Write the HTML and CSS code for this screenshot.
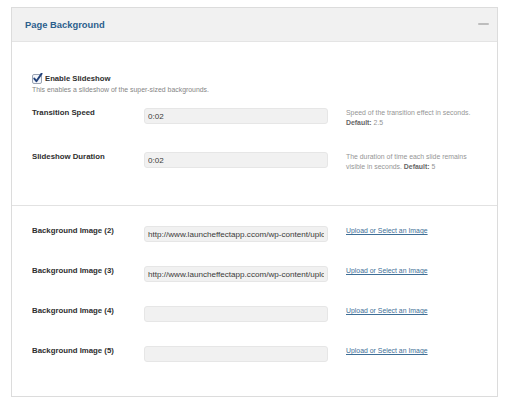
FILE: index.html
```html
<!DOCTYPE html>
<html>
<head>
<meta charset="utf-8">
<link rel="stylesheet" href="styles.css">
</head>
<body>
<div class="panel">
  <div class="panel-head">
    <h2 class="panel-title">Page Background</h2>
    <span class="toggle"></span>
  </div>
  <div class="section section-top">
    <div class="check-row">
      <span class="checkbox">
        <svg width="11" height="11" viewBox="0 0 11 11">
          <rect x="0.5" y="1.5" width="9" height="9" rx="1.5" fill="#f4f6fa" stroke="#9aa3b3"/>
          <path d="M2.3 5.6 L4.4 8.2 L9.6 0.6" fill="none" stroke="#23427a" stroke-width="1.9" stroke-linecap="round" stroke-linejoin="round"/>
        </svg>
      </span>
      <span class="check-label">Enable Slideshow</span>
    </div>
    <p class="desc">This enables a slideshow of the super-sized backgrounds.</p>
    <div class="field field-first">
      <span class="field-label">Transition Speed</span>
      <input class="text-input" type="text" value="0:02">
      <p class="help">Speed of the transition effect in seconds.<br><b>Default:</b> 2.5</p>
    </div>
    <div class="field">
      <span class="field-label">Slideshow Duration</span>
      <input class="text-input" type="text" value="0:02">
      <p class="help">The duration of time each slide remains<br>visible in seconds. <b>Default:</b> 5</p>
    </div>
  </div>
  <div class="section section-images">
    <div class="field field-first">
      <span class="field-label">Background Image (2)</span>
      <input class="text-input" type="text" value="http://www.launcheffectapp.ccom/wp-content/uploads/2012/04/bg2.jpg">
      <a class="upload-link" href="#">Upload or Select an Image</a>
    </div>
    <div class="field">
      <span class="field-label">Background Image (3)</span>
      <input class="text-input" type="text" value="http://www.launcheffectapp.ccom/wp-content/uploads/2012/04/bg3.jpg">
      <a class="upload-link" href="#">Upload or Select an Image</a>
    </div>
    <div class="field">
      <span class="field-label">Background Image (4)</span>
      <input class="text-input" type="text" value="">
      <a class="upload-link" href="#">Upload or Select an Image</a>
    </div>
    <div class="field">
      <span class="field-label">Background Image (5)</span>
      <input class="text-input" type="text" value="">
      <a class="upload-link" href="#">Upload or Select an Image</a>
    </div>
  </div>
</div>
</body>
</html>
```

FILE: styles.css
```css
html, body {
  background: #ffffff;
}
body {
  margin: 7px 0 0 11px;
  font-family: "Liberation Sans", Arial, sans-serif;
  color: #333;
}
.panel {
  width: 485px;
  border: 1px solid #dcdcdc;
  background: #fff;
}
.panel-head {
  height: 33px;
  background: #f1f1f1;
  border-bottom: 1px solid #e4e4e4;
  display: flex;
  align-items: center;
  justify-content: space-between;
  padding: 0 8px 0 13px;
}
.panel-title {
  margin: 0;
  font-size: 9.4px;
  font-weight: bold;
  color: #2c5f8d;
  line-height: 12px;
  padding-top: 1px;
}
.toggle {
  width: 11px;
  height: 2px;
  background: #bdbdbd;
  border-radius: 1px;
  margin-top: -2px;
}
.section {
  padding: 32px 20px 33px 20px;
}
.section-top {
  border-bottom: 1px solid #e2e2e2;
}
.section-images {
  padding-top: 20px;
  padding-bottom: 34px;
}
.check-row {
  display: flex;
  align-items: center;
  height: 10px;
  gap: 2px;
}
.checkbox {
  display: flex;
  width: 11px;
  height: 11px;
  margin-top: -2px;
}
.check-label {
  font-size: 7.7px;
  font-weight: bold;
  color: #2e2e2e;
  line-height: 10px;
}
.desc {
  margin: 1px 0 0 0;
  font-size: 6.9px;
  line-height: 10px;
  color: #858585;
}
.field {
  display: grid;
  grid-template-columns: 112px 184px 1fr;
  align-items: start;
  margin-top: 24px;
}
.field-first {
  margin-top: 13px;
}
.section-images .field-first {
  margin-top: 0;
}
.field-label {
  font-size: 7.8px;
  font-weight: bold;
  line-height: 10px;
  color: #2e2e2e;
}
.text-input {
  box-sizing: border-box;
  width: 184px;
  height: 16px;
  margin: 0;
  padding: 0 3px;
  border: 1px solid #e6e6e6;
  border-radius: 3px;
  background: #f1f1f1;
  font-family: "Liberation Sans", Arial, sans-serif;
  font-size: 8.1px;
  color: #3a3a3a;
  outline: none;
}
.help {
  margin: 0 0 0 18px;
  font-size: 6.9px;
  line-height: 10px;
  color: #959595;
  white-space: nowrap;
}
.help b {
  color: #666;
}
.upload-link {
  margin-left: 18px;
  font-size: 6.9px;
  line-height: 10px;
  color: #3e6e96;
  text-decoration: underline;
  white-space: nowrap;
  justify-self: start;
}
```
